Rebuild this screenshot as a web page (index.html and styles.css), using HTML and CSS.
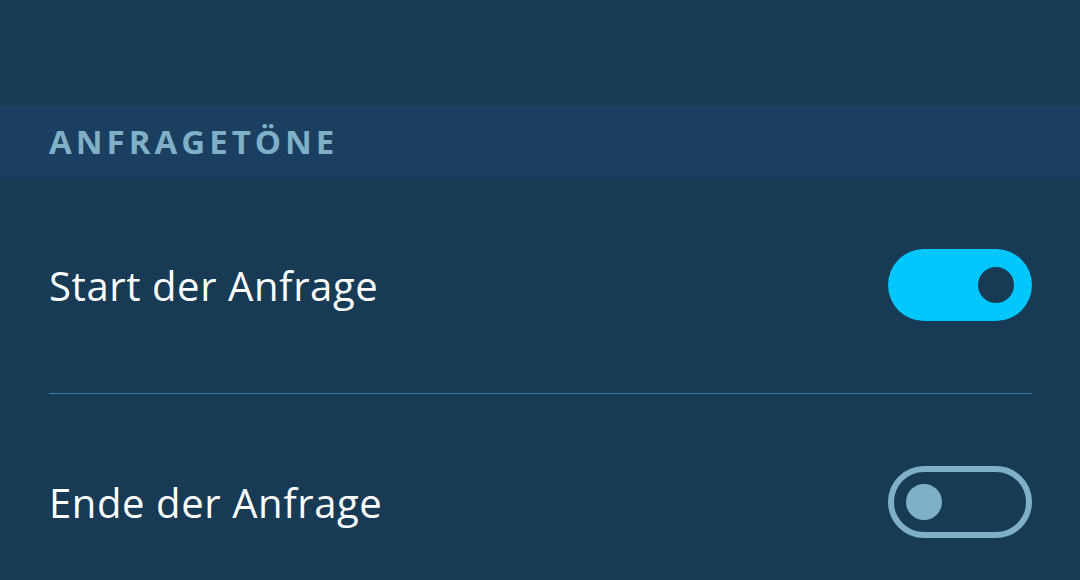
FILE: index.html
```html
<!DOCTYPE html>
<html lang="de">
<head>
<meta charset="utf-8">
<link rel="stylesheet" href="styles.css">
</head>
<body>
<div class="page">
  <div class="spacer"></div>
  <div class="section-header">ANFRAGETÖNE</div>
  <div class="list">
    <div class="row">
      <span class="label">Start der Anfrage</span>
      <span class="toggle on"><span class="knob"></span></span>
    </div>
    <div class="divider"></div>
    <div class="row">
      <span class="label">Ende der Anfrage</span>
      <span class="toggle off"><span class="knob"></span></span>
    </div>
  </div>
</div>
</body>
</html>
```
FILE: styles.css
```css
html, body {
  margin: 0;
  padding: 0;
  background: #173a55;
  overflow: hidden;
}
.page {
  width: 1080px;
  height: 580px;
  overflow: hidden;
  font-family: "Open Sans", "Noto Sans", sans-serif;
  color: #ffffff;
}
.spacer {
  height: 105px;
}
.section-header {
  height: 72px;
  background: #1a3f60;
  display: flex;
  align-items: center;
  padding-left: 49px;
  font-size: 33px;
  font-weight: 700;
  letter-spacing: 4px;
  color: #7fb0c8;
}
.list {
  padding: 0 48px 0 49px;
}
.row {
  height: 216px;
  display: flex;
  align-items: center;
  justify-content: space-between;
}
.label {
  font-size: 40px;
  letter-spacing: 0.6px;
}
.divider {
  height: 1px;
  background: #3a7c9c;
}
.toggle {
  width: 144px;
  height: 72px;
  border-radius: 36px;
  box-sizing: border-box;
  display: flex;
  align-items: center;
}
.toggle.on {
  background: #00c8ff;
  justify-content: flex-end;
  padding-right: 18px;
}
.toggle.on .knob {
  background: #173a55;
}
.toggle.off {
  border: 6px solid #7fb0c8;
  padding-left: 12px;
}
.toggle.off .knob {
  background: #7fb0c8;
}
.knob {
  width: 36px;
  height: 36px;
  border-radius: 50%;
}
```
